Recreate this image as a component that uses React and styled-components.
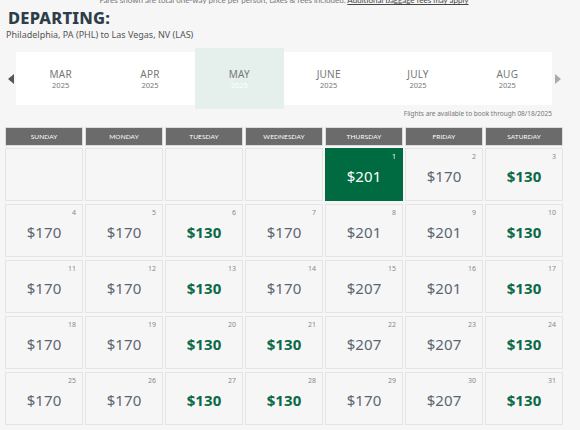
import React from "react";
import styled, { createGlobalStyle } from "styled-components";

const Global = createGlobalStyle`
  html, body { margin: 0; padding: 0; background: #f6f6f6; }
  body { font-family: "Noto Sans", "Open Sans", sans-serif; overflow: hidden; }
`;

const Page = styled.div`
  width: 568px;
  height: 430px;
  box-sizing: border-box;
  padding: 0 5px;
  display: flex;
  flex-direction: column;
`;

const Notice = styled.div`
  margin-top: -5px;
  height: 7px;
  font-family: "Lato", sans-serif;
  font-size: 8px;
  line-height: 10px;
  color: #777;
  text-align: center;
  white-space: nowrap;
  a { color: #444; text-decoration: underline; }
`;

const Title = styled.h1`
  margin: 0;
  padding: 0 0 0 3px;
  margin-top: 6px;
  font-family: "Noto Sans", sans-serif;
  font-weight: 800;
  font-size: 16.5px;
  line-height: 20px;
  color: #2d3e4a;
  letter-spacing: 0.2px;
`;

const Route = styled.div`
  padding-left: 1px;
  margin-top: 1px;
  font-size: 9px;
  line-height: 12px;
  color: #555;
`;

const MonthBar = styled.div`
  display: flex;
  align-items: center;
  margin-top: 7px;
  height: 61px;
`;

const Arrow = styled.div`
  width: 11px;
  display: flex;
  justify-content: center;
  color: ${(p) => p.$color};
`;

const Strip = styled.div`
  flex: 1;
  height: 53px;
  background: #fff;
  display: grid;
  grid-template-columns: repeat(6, 1fr);
`;

const Month = styled.div`
  display: flex;
  flex-direction: column;
  align-items: center;
  justify-content: center;
  margin: ${(p) => (p.$active ? "-4px 0" : "0")};
  background: ${(p) => (p.$active ? "#e5efeb" : "transparent")};
`;

const MonthName = styled.div`
  font-size: 10px;
  line-height: 12px;
  color: #777;
  letter-spacing: 0.2px;
`;

const Year = styled.div`
  font-size: 7.5px;
  line-height: 10px;
  color: ${(p) => (p.$active ? "#ffffff" : "#777")};
`;

const Note = styled.div`
  margin-top: 0;
  padding-right: 11px;
  text-align: right;
  font-size: 6.5px;
  line-height: 10px;
  color: #777;
`;

const Grid = styled.div`
  display: grid;
  grid-template-columns: repeat(7, 78px);
  column-gap: 2px;
  row-gap: ${(p) => p.$rowGap}px;
  margin-top: ${(p) => p.$top}px;
`;

const DayHead = styled.div`
  height: 19px;
  box-sizing: border-box;
  background: #6b6b6b;
  border: 1px solid #dcdcdc;
  color: #fff;
  font-family: "Lato", sans-serif;
  font-size: 6.5px;
  display: flex;
  align-items: center;
  justify-content: center;
  letter-spacing: 0.1px;
`;

const Cell = styled.div`
  position: relative;
  height: 53px;
  box-sizing: border-box;
  border: 1px solid ${(p) => (p.$selected ? "#006a40" : "#e4e4e4")};
  background: ${(p) => (p.$selected ? "#006a40" : "#f6f6f6")};
  display: flex;
  align-items: center;
  justify-content: center;
`;

const DateNum = styled.span`
  position: absolute;
  top: 3px;
  right: 6px;
  font-size: 7px;
  line-height: 9px;
  color: ${(p) => (p.$selected ? "#fff" : "#888")};
`;

const Price = styled.span`
  margin-top: 3px;
  font-size: 15px;
  letter-spacing: 0.1px;
  font-weight: ${(p) => (p.$low ? 700 : 400)};
  color: ${(p) => (p.$selected ? "#fff" : p.$low ? "#0b6a45" : "#5b6670")};
`;

const months = ["MAR", "APR", "MAY", "JUNE", "JULY", "AUG"];
const days = ["SUNDAY", "MONDAY", "TUESDAY", "WEDNESDAY", "THURSDAY", "FRIDAY", "SATURDAY"];
const prices = [
  201, 170, 130,
  170, 170, 130, 170, 201, 201, 130,
  170, 170, 130, 170, 207, 201, 130,
  170, 170, 130, 130, 207, 207, 130,
  170, 170, 130, 130, 170, 207, 130,
];

const cells = [null, null, null, null, ...prices.map((p, i) => ({ day: i + 1, price: p }))];

export default function App() {
  return (
    <Page>
      <Global />
      <Notice>
        Fares shown are total one-way price per person, taxes &amp; fees included.{" "}
        <a>Additional baggage fees may apply</a>
      </Notice>
      <Title>DEPARTING:</Title>
      <Route>Philadelphia, PA (PHL) to Las Vegas, NV (LAS)</Route>
      <MonthBar>
        <Arrow $color="#555">
          <svg width="6" height="10" viewBox="0 0 6 10"><path d="M6 0 L0 5 L6 10 Z" fill="currentColor" /></svg>
        </Arrow>
        <Strip>
          {months.map((m) => (
            <Month key={m} $active={m === "MAY"}>
              <MonthName>{m}</MonthName>
              <Year $active={m === "MAY"}>2025</Year>
            </Month>
          ))}
        </Strip>
        <Arrow $color="#aaa">
          <svg width="6" height="10" viewBox="0 0 6 10"><path d="M0 0 L6 5 L0 10 Z" fill="currentColor" /></svg>
        </Arrow>
      </MonthBar>
      <Note>Flights are available to book through 08/18/2025</Note>
      <Grid $rowGap={0} $top={8}>
        {days.map((d) => (
          <DayHead key={d}>{d}</DayHead>
        ))}
      </Grid>
      <Grid $rowGap={3} $top={2}>
        {cells.map((c, i) =>
          c ? (
            <Cell key={i} $selected={c.day === 1}>
              <DateNum $selected={c.day === 1}>{c.day}</DateNum>
              <Price $low={c.price === 130} $selected={c.day === 1}>${c.price}</Price>
            </Cell>
          ) : (
            <Cell key={i} />
          )
        )}
      </Grid>
    </Page>
  );
}
